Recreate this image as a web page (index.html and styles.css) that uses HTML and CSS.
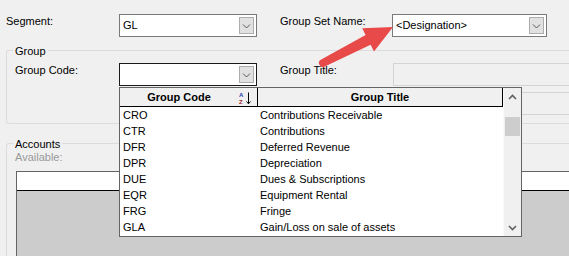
FILE: index.html
```html
<!DOCTYPE html>
<html>
<head>
<meta charset="utf-8">
<link rel="stylesheet" href="styles.css">
</head>
<body>
<div class="top-row">
  <label class="lbl lbl-seg">Segment:</label>
  <div class="combo combo-seg">
    <span class="combo-text">GL</span>
    <span class="drop-btn"><svg width="9" height="6" viewBox="0 0 9 6"><path d="M1 1.5 L4.5 5 L8 1.5" fill="none" stroke="#5a5a5a" stroke-width="1"/></svg></span>
  </div>
  <label class="lbl lbl-gsn">Group Set Name:</label>
  <div class="combo combo-gsn">
    <span class="combo-text">&lt;Designation&gt;</span>
    <span class="drop-btn"><svg width="9" height="6" viewBox="0 0 9 6"><path d="M1 1.5 L4.5 5 L8 1.5" fill="none" stroke="#5a5a5a" stroke-width="1"/></svg></span>
  </div>
</div>

<fieldset class="box group">
  <legend>Group</legend>
  <div class="group-grid">
    <label class="lbl">Group Code:</label>
    <div class="combo combo-code">
      <span class="combo-text"></span>
      <span class="drop-btn"><svg width="9" height="6" viewBox="0 0 9 6"><path d="M1 1.5 L4.5 5 L8 1.5" fill="none" stroke="#5a5a5a" stroke-width="1"/></svg></span>
    </div>
    <span></span>
    <label class="lbl">Group Title:</label>
    <div class="textbox"></div>
    <div class="textbox row2"></div>
  </div>
</fieldset>

<fieldset class="box accounts">
  <legend>Accounts</legend>
  <div class="avail">Available:</div>
  <div class="listbox">
    <div class="lb-head"></div>
    <div class="lb-body"></div>
  </div>
</fieldset>

<div class="dropdown">
  <div class="dd-list">
    <div class="dd-head">
      <div class="dd-hcell dd-hcode">
        <span class="dd-htext">Group Code</span>
        <span class="sort-icon"><svg width="14" height="14" viewBox="0 0 14 14">
          <text x="1" y="5.5" class="sort-a">A</text>
          <text x="1" y="13" class="sort-z">Z</text>
          <path d="M10.5 1.5 V12.5 M8.5 10.5 L10.5 12.8 L12.5 10.5" fill="none" stroke="#000" stroke-width="1"/>
        </svg></span>
      </div>
      <div class="dd-hcell dd-htitle"><span class="dd-htext">Group Title</span></div>
    </div>
    <div class="dd-row"><span>CRO</span><span>Contributions Receivable</span></div>
    <div class="dd-row"><span>CTR</span><span>Contributions</span></div>
    <div class="dd-row"><span>DFR</span><span>Deferred Revenue</span></div>
    <div class="dd-row"><span>DPR</span><span>Depreciation</span></div>
    <div class="dd-row"><span>DUE</span><span>Dues &amp; Subscriptions</span></div>
    <div class="dd-row"><span>EQR</span><span>Equipment Rental</span></div>
    <div class="dd-row"><span>FRG</span><span>Fringe</span></div>
    <div class="dd-row"><span>GLA</span><span>Gain/Loss on sale of assets</span></div>
  </div>
  <div class="vscroll">
    <div class="sb-btn"><svg width="9" height="6" viewBox="0 0 9 6"><path d="M1 5 L4.5 1.5 L8 5" fill="none" stroke="#606060" stroke-width="1.6"/></svg></div>
    <div class="sb-track"><div class="sb-thumb"></div></div>
    <div class="sb-btn"><svg width="9" height="6" viewBox="0 0 9 6"><path d="M1 1 L4.5 4.5 L8 1" fill="none" stroke="#606060" stroke-width="1.6"/></svg></div>
  </div>
</div>

<svg class="callout" width="569" height="256" viewBox="0 0 569 256">
  <path d="M321.2 59.4 L365.6 34.9 L362.2 28.2 L393 27 L374 51.4 L370.6 44.7 L324.8 66.6 A4 4 0 0 1 321.2 59.4 Z" fill="#e84a4a"/>
</svg>
</body>
</html>
```

FILE: styles.css
```css
html, body {
  margin: 0;
  padding: 0;
}
body {
  width: 569px;
  height: 256px;
  overflow: hidden;
  position: relative;
  background: #f0f0f0;
  font-family: "Liberation Sans", Arial, sans-serif;
  font-size: 11px;
  line-height: 13px;
  color: #000;
}

.lbl {
  display: block;
  padding-top: 1px;
  white-space: nowrap;
}

.top-row {
  display: flex;
  align-items: flex-start;
  padding: 14px 0 0 6px;
}
.lbl-seg { width: 113px; }
.lbl-gsn { width: 112px; margin-left: 23px; }

.combo {
  box-sizing: border-box;
  height: 23px;
  border: 1px solid #7a7a7a;
  background: #fff;
  padding: 2px;
  display: flex;
  justify-content: space-between;
  align-items: stretch;
}
.combo-seg { width: 138px; }
.combo-gsn { width: 155px; }
.combo-code { width: 138px; border-color: #1a1a1a; }

.combo-text {
  line-height: 17px;
  padding-left: 1px;
  white-space: nowrap;
}
.drop-btn {
  box-sizing: border-box;
  width: 15px;
  height: 17px;
  background: #e1e1e1;
  border: 1px solid #adadad;
  display: flex;
  align-items: center;
  justify-content: center;
  padding-top: 1px;
}
.drop-btn svg { display: block; }

.box {
  border: 1px solid #dcdcdc;
  border-right: none;
  border-radius: 3px 0 0 3px;
  margin: 0 0 0 6px;
  min-inline-size: 0;
  width: 563px;
  box-sizing: border-box;
}
.box legend {
  padding: 3px 2px 0;
  margin-left: -2px;
  line-height: 13px;
}

.group {
  margin-top: 5px;
  padding: 5px 0 8px 8px;
}
.group-grid {
  display: grid;
  grid-template-columns: 104px 138px 23px 113px 1fr;
  row-gap: 6px;
}
.textbox {
  box-sizing: border-box;
  height: 23px;
  border: 1px solid #d4d4d4;
  border-right: none;
  background: #f0f0f0;
}
.textbox.row2 {
  grid-column: 5;
}

.accounts {
  margin-top: 11px;
  padding: 0 0 0 8px;
  height: 121px;
  border-bottom: none;
  border-radius: 3px 0 0 0;
}
.avail {
  color: #9a9a9a;
}
.listbox {
  margin: 7px 0 0 1px;
  border: 1px solid #646464;
  border-right: none;
  border-bottom: none;
  background: #ccc;
  height: 85px;
  box-sizing: border-box;
}
.lb-head {
  height: 19px;
  box-sizing: border-box;
  background: #fff;
  border-bottom: 1px solid #000;
}

/* dropdown overlay */
.dropdown {
  position: absolute;
  left: 119px;
  top: 87px;
  width: 403px;
  height: 150px;
  box-sizing: border-box;
  border: 1px solid #646464;
  background: #fff;
  display: flex;
}
.dd-list {
  width: 383px;
}
.dd-head {
  display: grid;
  grid-template-columns: 138px 245px;
  height: 19px;
  box-sizing: border-box;
  border-bottom: 1px solid #000;
  background: #f0f0f0;
}
.dd-hcell {
  box-sizing: border-box;
  border-right: 1px solid #000;
  display: flex;
  font-weight: bold;
  padding-top: 1px;
  line-height: 17px;
}
.dd-htext {
  flex: 1;
  text-align: center;
  white-space: nowrap;
}
.sort-icon {
  width: 19px;
  padding-top: 2px;
}
.sort-icon svg { display: block; }
.sort-a {
  font-family: "Liberation Sans", Arial, sans-serif;
  font-size: 6px;
  font-weight: bold;
  fill: #1c3aa8;
}
.sort-z {
  font-family: "Liberation Sans", Arial, sans-serif;
  font-size: 6px;
  font-weight: bold;
  fill: #9c1c1c;
}
.dd-row {
  display: grid;
  grid-template-columns: 138px 1fr;
  height: 16px;
  line-height: 16px;
  white-space: nowrap;
}
.dd-row span:first-child { padding-left: 3px; }
.dd-row span:last-child { padding-left: 2px; }

.vscroll {
  width: 18px;
  box-sizing: border-box;
  border-left: 1px solid #fafafa;
  background: #f0f0f0;
  display: flex;
  flex-direction: column;
}
.sb-btn {
  height: 17px;
  display: flex;
  align-items: center;
  justify-content: center;
}
.sb-btn svg { display: block; }
.sb-track {
  flex: 1;
}
.sb-thumb {
  margin: 12px 0 0 1px;
  width: 15px;
  height: 19px;
  background: #cdcdcd;
}

.callout {
  position: absolute;
  left: 0;
  top: 0;
  pointer-events: none;
}
```
